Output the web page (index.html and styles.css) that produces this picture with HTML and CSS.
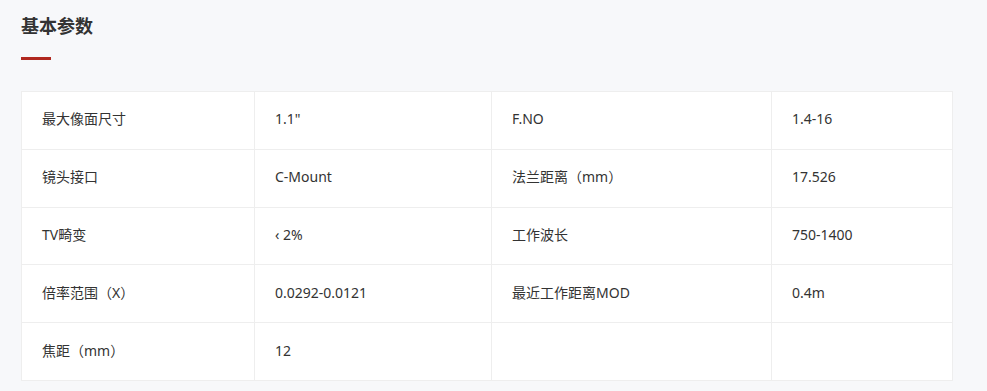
FILE: index.html
```html
<!DOCTYPE html>
<html lang="zh-CN">
<head>
<meta charset="utf-8">
<title>基本参数</title>
<link rel="stylesheet" href="styles.css">
</head>
<body>
<section class="params">
  <h2 class="params-title">基本参数</h2>
  <div class="params-bar"></div>
  <table class="params-table">
    <colgroup>
      <col class="c1"><col class="c2"><col class="c3"><col class="c4">
    </colgroup>
    <tbody>
      <tr><td>最大像面尺寸</td><td>1.1"</td><td>F.NO</td><td>1.4-16</td></tr>
      <tr><td>镜头接口</td><td>C-Mount</td><td>法兰距离（mm）</td><td>17.526</td></tr>
      <tr><td>TV畸变</td><td>‹ 2%</td><td>工作波长</td><td>750-1400</td></tr>
      <tr><td>倍率范围（X）</td><td>0.0292-0.0121</td><td>最近工作距离MOD</td><td>0.4m</td></tr>
      <tr><td>焦距（mm）</td><td>12</td><td></td><td></td></tr>
    </tbody>
  </table>
</section>
</body>
</html>
```
FILE: styles.css
```css
html, body {
  margin: 0;
  padding: 0;
  background: #f7f8fa;
}
body {
  font-family: "Noto Sans", "Noto Sans CJK SC", sans-serif;
  color: #333;
}
.params {
  padding: 12px 0 0 21px;
}
.params-title {
  margin: 0;
  font-family: "Noto Sans CJK SC", sans-serif;
  font-size: 18px;
  line-height: 26px;
  font-weight: 700;
  color: #333;
}
.params-bar {
  width: 30px;
  height: 3px;
  background: #b0281f;
  margin-top: 19px;
}
.params-table {
  margin-top: 31px;
  border-collapse: collapse;
  table-layout: fixed;
  width: 931px;
  background: #fff;
}
.c1 { width: 233px; }
.c2 { width: 237px; }
.c3 { width: 280px; }
.c4 { width: 181px; }
.params-table td {
  border: 1px solid #eeeeee;
  height: 54.8px;
  padding: 0 20px 2px;
  font-size: 14px;
  line-height: 20px;
  color: #333;
  vertical-align: middle;
}
```
